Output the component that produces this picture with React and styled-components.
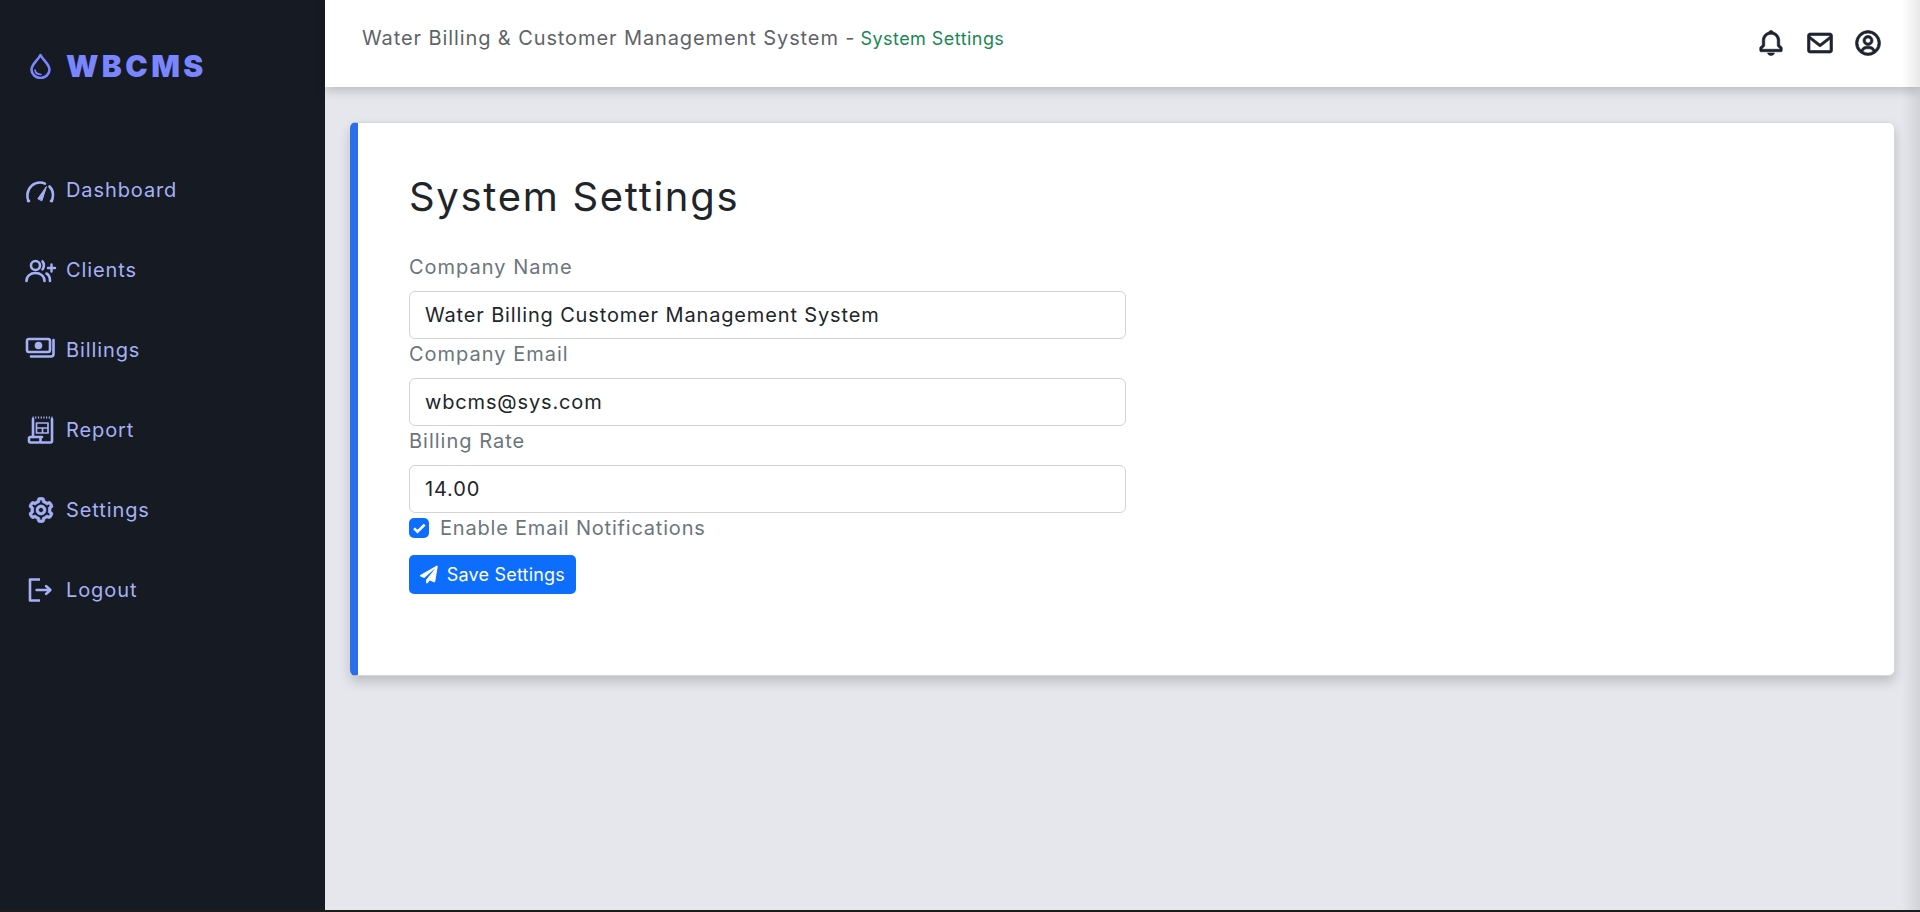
import React from 'react';
import styled, { createGlobalStyle } from 'styled-components';
import { BiCog, BiBell, BiEnvelope, BiUserCircle, BiCheck } from 'react-icons/bi';
import { FaPaperPlane } from 'react-icons/fa';

const GlobalStyle = createGlobalStyle`
  html { background: #1a1c1e; }
  body {
    margin: 0;
    font-family: Inter, "Liberation Sans", sans-serif;
  }
  * { box-sizing: border-box; }
`;

const Layout = styled.div`
  display: grid;
  grid-template-columns: 325px 1fr;
  height: 910px;
  background: #e6e7ec;
`;

const Sidebar = styled.aside`
  background: #161a23;
  padding-top: 46px;
`;

const Brand = styled.div`
  display: flex;
  align-items: center;
  gap: 15px;
  padding-left: 30px;
  height: 40px;
  color: #7a86ff;
  font-size: 30px;
  font-weight: 900;
  letter-spacing: 3.4px;
`;

const Nav = styled.nav`
  display: flex;
  flex-direction: column;
  margin-top: 64px;
`;

const NavItem = styled.a`
  display: flex;
  align-items: center;
  height: 80px;
  padding-left: 25px;
  gap: 9px;
  color: #a5b1f4;
  font-size: 20px;
  letter-spacing: 0.9px;
`;

const Main = styled.main`
  position: relative;
  display: flex;
  flex-direction: column;
  min-width: 0;

  /* soft shade down the right edge of the page */
  &::after {
    content: '';
    position: absolute;
    top: 0;
    right: 0;
    bottom: 0;
    width: 18px;
    background: linear-gradient(to right, rgba(0, 0, 0, 0), rgba(0, 0, 0, 0.09));
    pointer-events: none;
  }
`;

const Header = styled.header`
  display: flex;
  align-items: center;
  justify-content: space-between;
  height: 87px;
  padding: 0 37px 0 37px;
  background: #fff;
  box-shadow: 0 4px 10px rgba(0, 0, 0, 0.18);
`;

const Crumb = styled.div`
  display: flex;
  align-items: baseline;
  gap: 5px;
  margin-bottom: 12px;
  color: #5f6368;
  font-size: 20px;
  letter-spacing: 0.9px;
`;

const CrumbPage = styled.span`
  color: #198754;
  font-size: 18px;
  letter-spacing: 0.45px;
`;

const HeaderIcons = styled.div`
  display: flex;
  align-items: center;
  gap: 18.5px;
  color: #1f2330;
  margin-bottom: 1px;

  svg { stroke: currentColor; stroke-width: 0.5; }
`;

const Content = styled.div`
  padding: 35px 25px 0 25px;
`;

const Card = styled.section`
  height: 554px;
  padding: 50px 50px 0 51px;
  background: #fff;
  border: 1px solid #d6d7da;
  border-left: 8px solid #2b6ee9;
  border-radius: 6px;
  box-shadow: 0 6px 12px rgba(0, 0, 0, 0.18);
`;

const Title = styled.h1`
  margin: 0 0 31px;
  color: #212529;
  font-size: 40px;
  font-weight: 400;
  letter-spacing: 1.7px;
  line-height: 48px;
`;

const Form = styled.form`
  display: flex;
  flex-direction: column;
  width: 717px;
`;

const Label = styled.label`
  display: block;
  margin-bottom: 9px;
  color: #6c757d;
  font-size: 20px;
  letter-spacing: 1px;
  line-height: 30px;
`;

const Input = styled.input`
  display: block;
  width: 100%;
  height: 48px;
  padding: 0 15px;
  color: #212529;
  font: inherit;
  font-size: 20px;
  letter-spacing: 0.85px;
  background: #fff;
  border: 1px solid #ced4da;
  border-radius: 6px;
  outline: none;
`;

const CheckRow = styled.label`
  display: flex;
  align-items: center;
  gap: 11px;
  height: 26px;
  margin-top: 2px;
  color: #6c757d;
  font-size: 20px;
  letter-spacing: 0.8px;
`;

const CheckBox = styled.span`
  display: flex;
  align-items: center;
  justify-content: center;
  width: 20px;
  height: 20px;
  color: #fff;
  background: #0d6efd;
  border-radius: 5px;

  svg { stroke: currentColor; stroke-width: 1.5; }
`;

const SaveButton = styled.button`
  display: inline-flex;
  align-items: center;
  align-self: flex-start;
  gap: 9px;
  width: 167px;
  height: 39px;
  margin-top: 14px;
  padding: 0 11px;
  color: #fff;
  font: inherit;
  font-size: 18px;
  letter-spacing: 0.2px;
  white-space: nowrap;
  background: #0d6efd;
  border: none;
  border-radius: 5px;
`;

const Glyph = styled.svg`
  flex: none;
  fill: none;
  stroke: currentColor;
  stroke-width: 2.6;
  stroke-linecap: round;
  stroke-linejoin: round;
`;

const DropIcon = () => (
  <Glyph width="21" height="26" viewBox="0 0 21 26">
    <path d="M10.5 2C8 7 1.5 11.5 1.5 16.5a9 8.5 0 0 0 18 0C19.5 11.5 13 7 10.5 2z" />
    <path d="M5 17c.5 3 3 4.5 6 4.5" strokeWidth="1.6" />
  </Glyph>
);

// icons below are drawn in a 32x28 box, the nav row's icon slot
const DashboardIcon = () => (
  <Glyph width="32" height="28" viewBox="0 0 32 28">
    <path d="M3.5 25C2.5 23 2.2 21 2.4 18.5 3 11.5 8.5 6.5 15 6.5c2 0 3.5.4 5 1.1" />
    <path d="M24.5 10.5c2.200 2.200 3.500 5 3.500 8.200 0 2.300-.3 4.300-1.500 6.300" />
    <path d="M13 22.5 21.5 10.500 17 24.500z" fill="currentColor" strokeWidth="1" />
    <path d="M3 25h1M26 25h1" />
  </Glyph>
);

const ClientsIcon = () => (
  <Glyph width="32" height="28" viewBox="0 0 32 28">
    <circle cx="10.5" cy="9.5" r="4.5" />
    <path d="M17.5 5.5c1.8 1.8 1.8 6 0 7.8" />
    <path d="M1.5 25c0-5 4-8 9-8s9 3 9 8" />
    <path d="M21.5 17.5c2.5 1.3 3.5 4 3.5 7.5" />
    <path d="M26.5 8.5v7M23 12h7" strokeWidth="2.4" />
  </Glyph>
);

const BillingsIcon = () => (
  <Glyph width="32" height="28" viewBox="0 0 32 28">
    <rect x="2" y="3" width="23" height="13" rx="2" />
    <circle cx="13.5" cy="9.5" r="3.8" fill="currentColor" stroke="none" />
    <path d="M28.5 4v14c0 1.5-.8 2.500-2.500 2.500H6" />
  </Glyph>
);

const ReportIcon = () => (
  <Glyph width="32" height="28" viewBox="0 0 32 28">
    <path d="M8 3v18" />
    <path d="M27 3v22c0 1-.5 1.5-1.5 1.5H16" />
    <path d="M7.5 1.5h20" strokeDasharray="1.2 1.5" strokeLinecap="butt" strokeWidth="2" />
    <path d="M11.5 7h11.500v10H11.500zM11.500 12h11.500M17.500 12v5" strokeWidth="1.7" />
    <path d="M17 21H5.500c-1 0-1.500.5-1.500 1.500V25c0 1 .5 1.500 1.500 1.500H14c1 0 1.500-.5 1.500-1.500v-2.500" />
  </Glyph>
);

const LogoutIcon = () => (
  <Glyph width="32" height="28" viewBox="0 0 32 28">
    <path d="M15 3.500H5v21h10" strokeLinecap="butt" />
    <path d="M11.500 14H25M21 10l4.500 4-4.500 4" strokeWidth="2.4" />
  </Glyph>
);

const CogIcon = styled(BiCog)`
  margin: 0 1px;
  stroke: currentColor;
  stroke-width: 0.6;
`;

const SettingsIcon = () => <CogIcon size={30} />;

const navItems = [
  { label: 'Dashboard', Icon: DashboardIcon },
  { label: 'Clients', Icon: ClientsIcon },
  { label: 'Billings', Icon: BillingsIcon },
  { label: 'Report', Icon: ReportIcon },
  { label: 'Settings', Icon: SettingsIcon },
  { label: 'Logout', Icon: LogoutIcon },
];

const fields = [
  { label: 'Company Name', value: 'Water Billing Customer Management System' },
  { label: 'Company Email', value: 'wbcms@sys.com' },
  { label: 'Billing Rate', value: '14.00' },
];

const App = () => (
  <Layout>
    <GlobalStyle />
    <Sidebar>
      <Brand>
        <DropIcon />
        WBCMS
      </Brand>
      <Nav>
        {navItems.map(({ label, Icon }) => (
          <NavItem key={label}>
            <Icon />
            {label}
          </NavItem>
        ))}
      </Nav>
    </Sidebar>
    <Main>
      <Header>
        <Crumb>
          Water Billing &amp; Customer Management System -
          <CrumbPage>System Settings</CrumbPage>
        </Crumb>
        <HeaderIcons>
          <BiBell size={30} />
          <BiEnvelope size={30} />
          <BiUserCircle size={30} />
        </HeaderIcons>
      </Header>
      <Content>
        <Card>
          <Title>System Settings</Title>
          <Form>
            {fields.map(({ label, value }) => (
              <div key={label}>
                <Label>{label}</Label>
                <Input defaultValue={value} />
              </div>
            ))}
            <CheckRow>
              <CheckBox><BiCheck size={18} /></CheckBox>
              Enable Email Notifications
            </CheckRow>
            <SaveButton type="button">
              <FaPaperPlane size={19} />
              Save Settings
            </SaveButton>
          </Form>
        </Card>
      </Content>
    </Main>
  </Layout>
);

export default App;
